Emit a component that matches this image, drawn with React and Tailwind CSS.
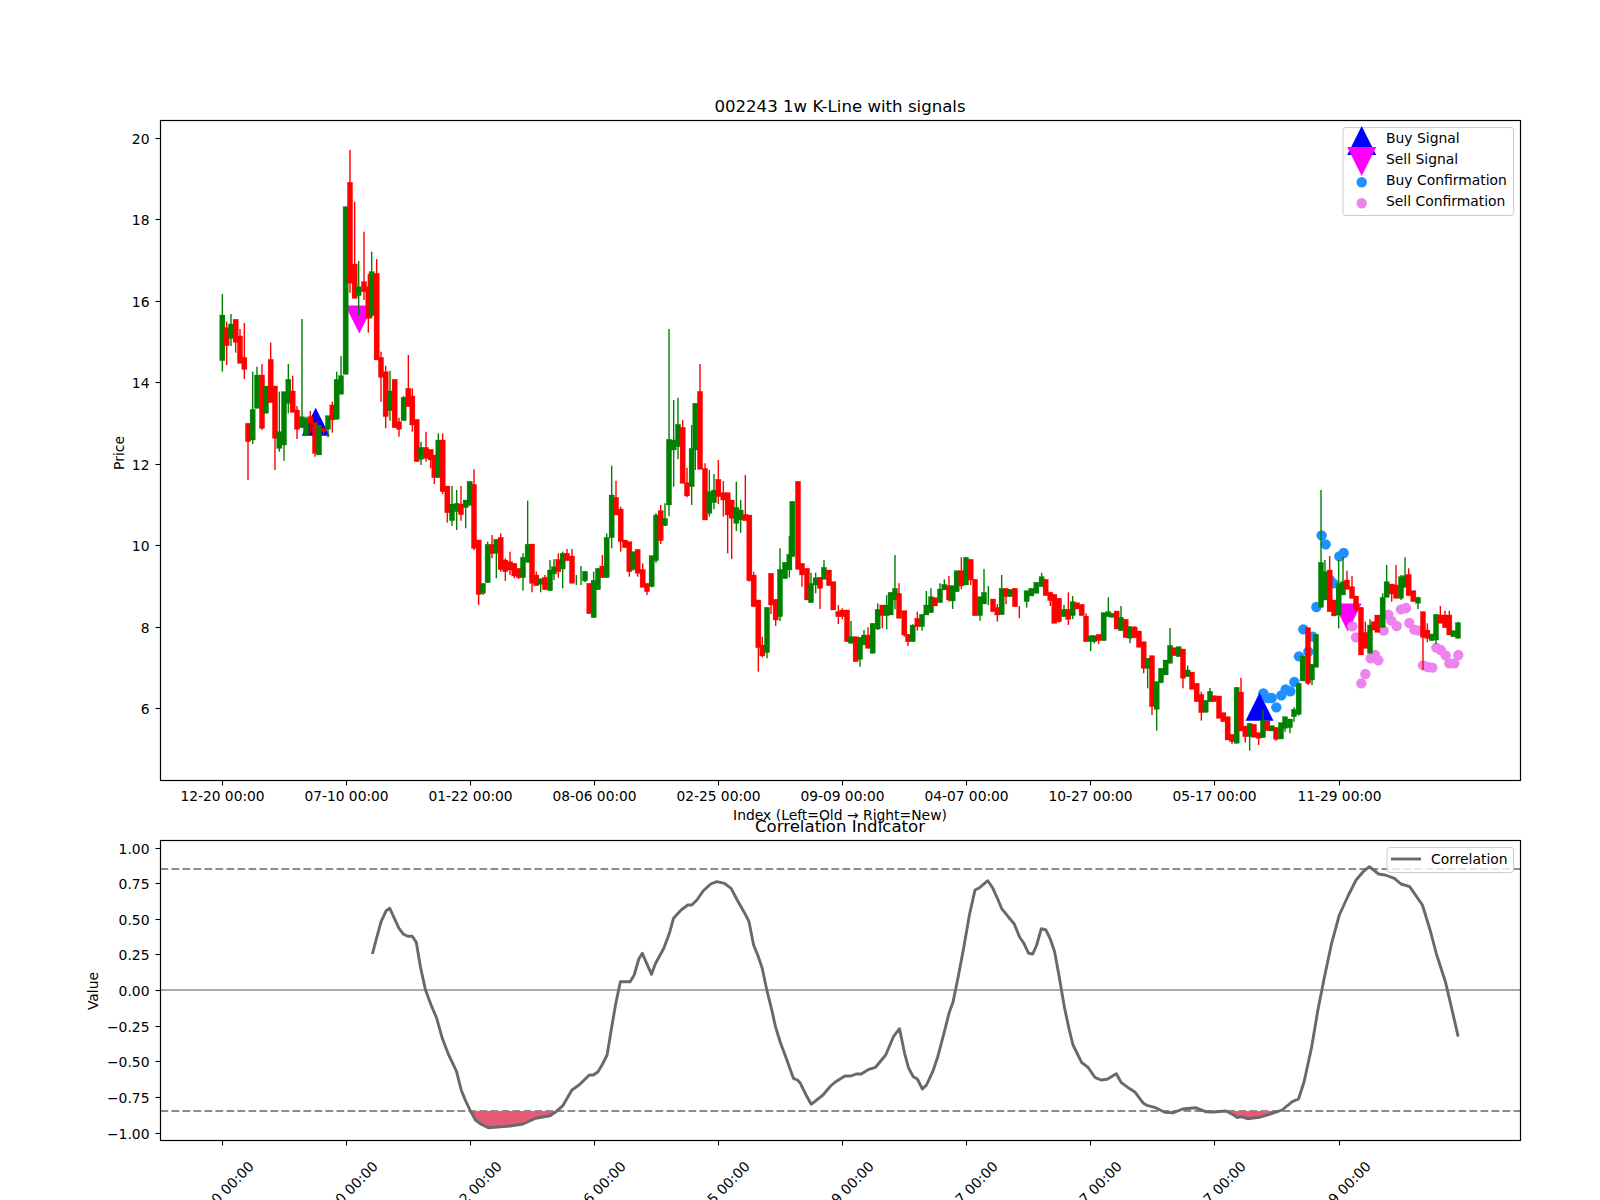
import React from 'react';

/* ── Figure geometry (page pixels) ───────────────────── */
const PRICE_AXES = { left: 160.5, right: 1520.5, top: 120.5, bottom: 780.5 };
const CORR_AXES = { left: 160.5, right: 1520.5, top: 840.5, bottom: 1140.5 };
const TICK_X = [222.5, 346.5, 470.5, 594.5, 718.5, 842.5, 966.5, 1090.5, 1214.5, 1339.5];
const TICK_LABELS = ['12-20 00:00', '07-10 00:00', '01-22 00:00', '08-06 00:00', '02-25 00:00', '09-09 00:00', '04-07 00:00', '10-27 00:00', '05-17 00:00', '11-29 00:00'];
const PRICE_TICKS = [[20, 138.5], [18, 219.5], [16, 301.5], [14, 382.5], [12, 464.5], [10, 545.5], [8, 627.5], [6, 708.5]];
const CORR_TICKS = [['1.00', 848.5], ['0.75', 883.5], ['0.50', 919.5], ['0.25', 954.5], ['0.00', 990.5], ['−0.25', 1026.5], ['−0.50', 1061.5], ['−0.75', 1097.5], ['−1.00', 1133.5]];

const R = '#ff0000';
const G = '#008000';

/* Candles sampled from the chart at 3x: [x, bodyTop, bodyBottom, high, low, colour] */
const CANDLE_BLOCKS = [
  { ox: 100, oy: 100, rows: [
    [367,645,782,582,815,G],[380,683,737,665,795,R],[393,672,715,642,738,G],[407,658,727,658,758,R],[420,708,790,687,790,R],[433,772,808,669,837,R],
    [444,970,1025,970,1140,R],[458,928,1020,815,1032,G],[471,825,925,800,925,G],[486,825,985,792,990,R],[498,858,940,858,940,G],[512,778,908,728,908,R],
    [525,858,1015,858,1110,R],[538,995,1045,875,1055,G],[552,875,1035,875,1082,G],[565,838,910,792,940,G],[578,873,937,827,937,R],[591,930,988,918,1017,R],
    [606,950,983,657,983,G],[618,955,1005,950,1005,G],[631,950,970,933,1000,R],[645,967,1060,967,1070,R],[657,975,1065,975,1065,G],[671,985,995,985,1005,R],
    [684,947,988,947,1012,G],[697,915,960,905,998,R],[710,838,958,815,958,G],[723,827,883,768,883,G],[737,320,823,320,823,G],[750,247,550,150,578,R],
    [764,492,595,305,595,R],[776,560,587,483,647,G],[792,545,575,395,600,R],[805,560,655,522,698,R],[815,515,647,455,655,G],[830,520,780,477,780,R],
    [843,772,832,755,905,R],[857,815,950,797,985,R],[870,873,932,812,962,G],[884,838,983,838,983,R],[897,965,988,953,1010,R],[911,892,962,888,962,G],
    [925,865,920,765,920,R],[937,888,975,865,995,R],[950,958,1085,958,1085,R],[963,1042,1078,1025,1095,G],[978,1042,1075,995,1085,R],
  ] },
  { ox: 430, oy: 440, rows: [
    [2,28,60,28,85,R],[13,45,113,45,132,R],[25,0,113,-20,113,G],[38,0,155,-20,162,R],[52,138,218,138,248,R],[66,192,242,138,258,G],[80,190,215,150,270,G],
    [93,192,224,138,242,R],[107,180,203,180,265,G],[119,124,196,124,196,G],[132,133,325,88,330,R],[146,300,464,300,495,R],[159,430,460,430,465,G],
    [173,313,428,305,428,G],[186,313,341,285,355,R],[199,298,340,298,415,G],[212,292,389,280,395,R],[226,360,395,355,423,R],[240,365,390,335,405,R],
    [253,370,408,370,415,R],[266,385,413,385,417,R],[279,352,413,340,452,G],[293,313,367,182,367,G],[306,312,430,312,457,R],[319,405,437,395,437,R],
    [332,416,433,416,457,G],[345,412,449,405,449,R],[360,390,452,360,452,G],[372,380,402,358,420,G],[385,358,395,340,413,R],[398,340,387,335,445,G],
    [411,340,362,327,362,R],[426,348,430,327,430,R],[439,405,405,405,435,G],[453,395,395,378,435,G],[465,394,423,394,427,G],[478,430,521,430,521,R],
    [491,421,533,395,533,G],[504,385,449,385,449,G],[517,378,413,345,413,R],[530,292,413,280,413,G],[545,165,293,77,325,G],[558,172,225,122,225,R],
    [572,207,305,200,335,R],[585,300,323,300,323,R],[598,305,395,305,410,R],
  ] },
  { ox: 500, oy: 300, rows: [
    [400,755,808,755,812,G],[413,748,820,748,830,R],[428,808,862,790,862,R],[441,850,875,850,885,R],[455,767,860,767,862,G],[468,645,782,640,788,G],
    [482,632,722,615,732,R],[495,655,677,610,677,G],[507,418,615,87,648,G],[521,420,450,300,560,G],[534,373,440,293,478,G],[548,382,550,360,550,R],
    [561,548,588,503,592,R],[575,445,560,375,615,G],[586,310,450,310,510,G],[600,274,508,192,508,R],[615,505,660,490,660,R],[628,575,640,510,650,G],
    [642,570,608,522,628,G],[655,538,590,480,612,R],[670,578,600,543,650,R],[683,578,645,578,760,R],[695,600,655,600,777,R],[709,622,670,545,693,G],
    [722,630,660,600,698,G],[736,643,662,525,662,R],[748,645,842,645,845,R],[761,825,920,815,920,R],[775,900,1043,900,1115,R],[787,1035,1068,1010,1072,R],
    [801,922,1058,922,1075,G],[813,820,915,820,942,R],[827,898,960,898,978,R],[840,808,950,745,963,G],[855,787,836,787,836,G],[868,763,810,708,832,G],
    [877,604,770,604,770,G],[894,544,808,544,808,R],[906,790,825,790,860,R],[921,805,900,805,900,R],[933,850,908,818,908,G],[947,833,855,818,880,G],
    [960,832,865,832,927,R],[972,802,838,780,838,G],[987,810,857,810,857,R],[1000,845,930,845,930,R],[1015,935,950,915,972,R],[1027,930,950,925,958,R],
    [1041,930,1025,930,1025,R],[1053,1010,1030,963,1030,G],[1067,1010,1085,1010,1085,R],[1080,1012,1078,1012,1100,G],[1092,1005,1035,990,1035,G],
    [1104,1005,1045,982,1045,R],[1118,970,1060,970,1060,G],[1133,928,987,910,990,G],[1147,915,947,915,985,R],[1160,915,947,885,988,G],[1172,877,945,877,945,G],
    [1185,865,900,765,928,G],[1197,880,955,850,955,R],
  ] },
  { ox: 900, oy: 500, rows: [
    [13,332,405,332,410,R],[24,403,425,403,438,R],[38,375,425,373,425,G],[52,355,380,335,392,R],[66,343,380,343,392,G],[79,315,345,273,345,G],[93,290,338,265,338,G],
    [105,293,318,293,318,R],[120,267,308,250,308,G],[133,253,270,238,270,G],[147,257,300,228,305,R],[158,257,303,257,327,G],[170,212,275,212,275,G],
    [184,212,258,172,268,R],[198,172,255,172,255,G],[212,178,240,178,255,R],[225,238,347,238,347,R],[240,290,347,290,362,G],[252,277,312,207,312,G],
    [265,290,290,258,315,G],[279,297,335,297,335,R],[292,322,345,312,365,R],[305,265,344,225,344,G],[318,265,290,265,313,R],[331,268,290,268,290,G],
    [345,265,320,265,320,R],[358,335,335,318,355,R],[380,272,305,272,323,G],[394,265,288,265,288,G],[409,247,280,247,280,G],[425,230,260,218,260,G],
    [437,238,287,238,287,R],[451,277,302,275,318,R],[463,283,370,283,370,R],[477,295,365,295,368,R],[492,328,350,315,350,G],[505,328,358,277,375,R],
    [518,305,347,288,357,G],[531,308,327,308,327,R],[545,313,347,313,347,R],[558,348,425,340,425,R],[572,407,425,407,453,G],[583,407,425,407,430,G],
    [596,403,422,403,432,R],[611,338,422,338,422,G],[625,335,350,292,350,G],[636,340,352,340,352,G],[650,333,387,333,387,R],[663,352,392,318,392,G],
    [677,358,413,358,413,R],[690,380,415,378,430,G],[704,381,413,378,415,R],[717,393,442,393,442,R],[731,425,505,425,520,R],[743,475,505,475,565,G],
    [756,467,620,467,645,R],[770,545,628,545,692,G],[783,505,548,505,550,G],[797,480,525,480,525,G],[810,436,490,384,490,G],[822,443,467,443,467,R],
    [836,440,470,440,470,G],[849,447,535,447,565,R],[863,510,530,497,530,G],[876,516,568,516,568,R],[890,550,605,550,605,R],[904,583,638,575,662,R],
    [917,601,637,601,637,G],[930,574,605,564,605,G],[942,587,605,587,605,R],[957,588,655,588,655,R],[970,638,665,638,665,R],[983,650,720,650,720,R],
    [996,703,725,703,732,R],[1010,562,730,562,730,G],[1023,576,693,533,693,R],[1036,678,710,678,728,R],[1049,670,710,670,752,G],[1062,673,712,673,712,R],
    [1076,698,715,698,735,R],[1089,660,713,630,713,G],[1102,663,692,663,692,R],[1116,677,693,677,693,G],[1128,682,718,682,722,R],[1143,668,717,668,717,G],
    [1155,650,685,650,695,G],[1170,657,683,657,700,G],[1182,628,650,622,665,G],
  ] },
  { ox: 1200, oy: 480, rows: [
    [296,610,703,610,707,G],[308,528,603,528,603,G],[324,443,610,443,615,R],[336,553,600,553,615,G],[348,463,562,463,562,G],[363,247,382,30,382,G],
    [375,275,360,240,360,G],[389,270,395,228,395,R],[402,360,408,360,408,R],[416,310,405,240,445,G],[429,305,345,230,345,G],[441,300,328,272,328,R],
    [456,320,355,288,355,R],[468,348,390,348,395,R],[483,382,525,382,525,R],[496,457,505,425,505,R],[510,435,520,418,520,G],[521,425,450,425,450,R],
    [532,405,457,405,457,R],[548,352,442,340,442,G],[560,305,352,255,352,G],[575,312,342,312,365,R],[588,315,355,255,355,R],[603,290,355,285,360,G],
    [615,287,322,232,322,G],[626,283,347,265,347,R],[640,332,365,332,365,R],[654,352,370,350,387,G],[669,395,472,395,570,R],[682,450,475,430,487,R],
    [695,462,482,462,482,G],[708,403,480,403,492,G],[721,405,430,378,430,R],[735,405,443,392,443,R],[748,405,465,392,465,R],[760,452,470,452,470,G],
    [774,428,475,425,475,G],
  ] },
];

const CANDLES = CANDLE_BLOCKS.flatMap(({ ox, oy, rows }) =>
  rows.map(([x, top, bottom, high, low, color]) => ({
    x: ox + x / 3,
    top: oy + top / 3,
    bottom: oy + bottom / 3,
    high: oy + high / 3,
    low: oy + low / 3,
    color,
  }))
);

const at = ([x, y]) => [1200 + x / 3, 480 + y / 3];
const BUY_DOTS = [[365,166],[377,193],[418,229],[431,219],[400,310],[390,300],[349,381],[310,448],[338,470],[325,515],[297,529],[283,606],[271,634],[257,628],[244,646],[215,654],[203,654],[190,640],[229,682]].map(at);
const SELL_DOTS = [[457,439],[468,472],[551,452],[565,404],[574,422],[590,438],[603,388],[618,384],[628,429],[643,449],[657,452],[512,535],[525,525],[535,541],[496,582],[484,610],[669,556],[683,561],[697,563],[709,503],[722,510],[737,526],[748,550],[763,550],[775,525]].map(at);

/* Correlation curve sampled from the chart: x at 1.96x, y at 3x */
const left = (x, y) => [x / 1.96, 760 + y / 3];
const right = (x, y) => [800 + x / 1.96, 760 + y / 3];
const CURVE_A = [[730,582],[738,535],[747,485],[757,452],[764,445],[773,475],[782,505],[791,523],[799,529],[808,529],[816,547],[824,620],[834,690],[845,735],[856,775],[867,835],[878,880],[895,935],[904,990],[912,1020],[922,1053],[932,1080],[943,1093],[957,1103],[975,1101],[1000,1098],[1025,1092],[1050,1075],[1078,1067],[1090,1055],[1103,1037],[1121,990],[1135,975],[1145,960],[1155,945],[1163,945],[1172,935],[1180,915],[1190,885],[1198,810],[1207,730],[1216,665],[1235,665],[1243,645],[1252,597],[1259,580],[1277,643],[1285,610],[1301,565],[1312,520],[1320,475],[1335,450],[1348,435],[1356,435],[1366,420],[1378,393],[1393,372],[1405,365],[1420,370],[1433,385],[1445,420],[1458,455],[1468,485],[1477,555],[1485,585],[1494,625],[1503,690],[1512,745],[1520,800],[1530,850],[1540,890],[1555,955],[1563,960]];
const CURVE_B = [[0,968],[12,1005],[22,1033],[45,1005],[60,978],[70,965],[88,948],[100,948],[110,942],[120,942],[135,928],[148,922],[168,885],[183,830],[195,806],[205,880],[213,925],[222,950],[230,957],[240,987],[248,975],[260,935],[270,890],[283,815],[292,760],[300,725],[310,650],[320,570],[332,465],[343,390],[352,383],[368,362],[378,385],[387,415],[395,445],[408,470],[420,492],[430,530],[438,548],[448,580],[456,582],[464,555],[473,506],[482,510],[490,535],[499,575],[508,650],[518,740],[527,805],[535,855],[552,907],[565,923],[578,952],[590,960],[602,958],[620,941],[630,968],[645,985],[657,997],[673,1030],[680,1036],[695,1042],[715,1057],[732,1058],[750,1047],[775,1043],[795,1055],[810,1056],[835,1053],[850,1065],[857,1073],[865,1070],[877,1076],[900,1072],[920,1063],[945,1050],[965,1025],[977,1017],[988,965],[1003,860],[1015,750],[1028,650],[1042,550],[1057,465],[1075,405],[1090,360],[1105,333],[1116,320],[1134,342],[1147,345],[1165,355],[1178,372],[1195,380],[1220,435],[1235,510],[1248,585],[1265,665],[1275,730],[1290,830]];

const toPoints = (pts) => pts.map(([x, y]) => `${x.toFixed(1)},${y.toFixed(1)}`).join(' ');
const CURVE = toPoints([...CURVE_A.map(([x, y]) => left(x, y)), ...CURVE_B.map(([x, y]) => right(x, y))]);
const FILL_A = toPoints([[922,1053],[932,1080],[943,1093],[957,1103],[975,1101],[1000,1098],[1025,1092],[1050,1075],[1078,1067],[1090,1053]].map(([x, y]) => left(x, y)));
const FILL_B = toPoints([[838,1053],[850,1065],[857,1073],[865,1070],[877,1076],[900,1072],[920,1063],[945,1053]].map(([x, y]) => right(x, y)));

const upTriangle = (cx, base, size = 28) => `${cx},${base - size} ${cx - size / 2},${base} ${cx + size / 2},${base}`;
const downTriangle = (cx, base, size = 28) => `${cx},${base + size} ${cx - size / 2},${base} ${cx + size / 2},${base}`;

/* ── Shared axes parts ───────────────────────────────── */
function Frame({ axes }) {
  return (
    <rect
      x={axes.left}
      y={axes.top}
      width={axes.right - axes.left}
      height={axes.bottom - axes.top}
      fill="none"
      stroke="#000"
      strokeWidth="1.2"
    />
  );
}

function XTicks({ axes }) {
  return TICK_X.map((x) => (
    <line key={x} x1={x} x2={x} y1={axes.bottom} y2={axes.bottom + 5} stroke="#000" strokeWidth="1.1" />
  ));
}

function YAxis({ axes, ticks }) {
  return ticks.map(([label, y]) => (
    <g key={label}>
      <line x1={axes.left - 5} x2={axes.left} y1={y} y2={y} stroke="#000" strokeWidth="1.1" />
      <text x={axes.left - 11} y={y + 5} textAnchor="end" fontSize="13.9" fill="#000">{label}</text>
    </g>
  ));
}

function PricePanel() {
  return (
    <div className="h-[822px] w-full">
      <svg width="1600" height="822" viewBox="0 0 1600 822" className="block overflow-visible">
        <text x="840" y="112" textAnchor="middle" fontSize="16.6">002243 1w K-Line with signals</text>

        {BUY_DOTS.map(([x, y], i) => <circle key={i} cx={x} cy={y} r="5.2" fill="#1e90ff" />)}
        <polygon points={upTriangle(315.7, 435.7)} fill="#0000ff" />
        <polygon points={upTriangle(1259.5, 720.7)} fill="#0000ff" />
        <polygon points={downTriangle(359.3, 305.5)} fill="#ff00ff" />
        <polygon points={downTriangle(1347.7, 603.5)} fill="#ff00ff" />
        {SELL_DOTS.map(([x, y], i) => <circle key={i} cx={x} cy={y} r="5.2" fill="#ee82ee" />)}

        {CANDLES.map((c, i) => (
          <g key={i} fill={c.color} stroke={c.color}>
            <line x1={c.x} x2={c.x} y1={c.high} y2={c.low} strokeWidth="1.4" />
            {c.bottom > c.top && (
              <rect x={c.x - 2.6} y={c.top} width="5.2" height={c.bottom - c.top} strokeWidth="0.3" />
            )}
          </g>
        ))}

        <Frame axes={PRICE_AXES} />
        <XTicks axes={PRICE_AXES} />
        <YAxis axes={PRICE_AXES} ticks={PRICE_TICKS} />
        {TICK_X.map((x, i) => (
          <text key={x} x={x} y={801} textAnchor="middle" fontSize="13.8">{TICK_LABELS[i]}</text>
        ))}
        <text x="840" y="820" textAnchor="middle" fontSize="13.9">Index (Left=Old → Right=New)</text>
        <text transform="translate(124 453) rotate(-90)" textAnchor="middle" fontSize="13.9">Price</text>

        {/* Legend */}
        <rect x="1343" y="127.5" width="170.5" height="88" rx="3" fill="#fff" fillOpacity="0.8" stroke="#ccc" />
        <polygon points={upTriangle(1361.7, 155, 29)} fill="#0000ff" />
        <polygon points={downTriangle(1361.7, 147, 29)} fill="#ff00ff" />
        <circle cx="1361.7" cy="182.3" r="5.2" fill="#1e90ff" />
        <circle cx="1361.7" cy="203.3" r="5.2" fill="#ee82ee" />
        <text x="1386" y="143" fontSize="13.9">Buy Signal</text>
        <text x="1386" y="164" fontSize="13.9">Sell Signal</text>
        <text x="1386" y="185" fontSize="13.9">Buy Confirmation</text>
        <text x="1386" y="206" fontSize="13.9">Sell Confirmation</text>
      </svg>
    </div>
  );
}

function CorrelationPanel() {
  const { left: l, right: r } = CORR_AXES;
  return (
    <div className="h-[378px] w-full">
      <svg width="1600" height="378" viewBox="0 822 1600 378" className="block overflow-visible">
        <text x="840" y="832" textAnchor="middle" fontSize="16.6">Correlation Indicator</text>

        <line x1={l} x2={r} y1="869" y2="869" stroke="#8c8c8c" strokeWidth="2.1" strokeDasharray="7.7 3.3" />
        <line x1={l} x2={r} y1="1111" y2="1111" stroke="#8c8c8c" strokeWidth="2.1" strokeDasharray="7.7 3.3" />
        <line x1={l} x2={r} y1="990" y2="990" stroke="#aaaaaa" strokeWidth="2.1" />
        <polygon points={FILL_A} fill="#e65a76" />
        <polygon points={FILL_B} fill="#e65a76" />
        <polyline points={CURVE} fill="none" stroke="#696969" strokeWidth="2.9" strokeLinejoin="round" />

        <Frame axes={CORR_AXES} />
        <XTicks axes={CORR_AXES} />
        <YAxis axes={CORR_AXES} ticks={CORR_TICKS} />
        {TICK_X.map((x, i) => (
          <text
            key={x}
            transform={`translate(${x + 25} 1160) rotate(-45)`}
            textAnchor="end"
            dominantBaseline="hanging"
            fontSize="13.9"
          >
            {TICK_LABELS[i]}
          </text>
        ))}
        <text transform="translate(98 991) rotate(-90)" textAnchor="middle" fontSize="13.9">Value</text>

        {/* Legend */}
        <rect x="1387" y="847.5" width="126.5" height="25" rx="3" fill="#fff" fillOpacity="0.8" stroke="#ccc" />
        <line x1="1391" x2="1421" y1="859" y2="859" stroke="#696969" strokeWidth="2.9" />
        <text x="1431" y="864" fontSize="13.9">Correlation</text>
      </svg>
    </div>
  );
}

export default function App() {
  return (
    <div className="flex h-[1200px] w-[1600px] flex-col overflow-hidden bg-white font-['DejaVu_Sans',sans-serif] text-black">
      <PricePanel />
      <CorrelationPanel />
    </div>
  );
}
